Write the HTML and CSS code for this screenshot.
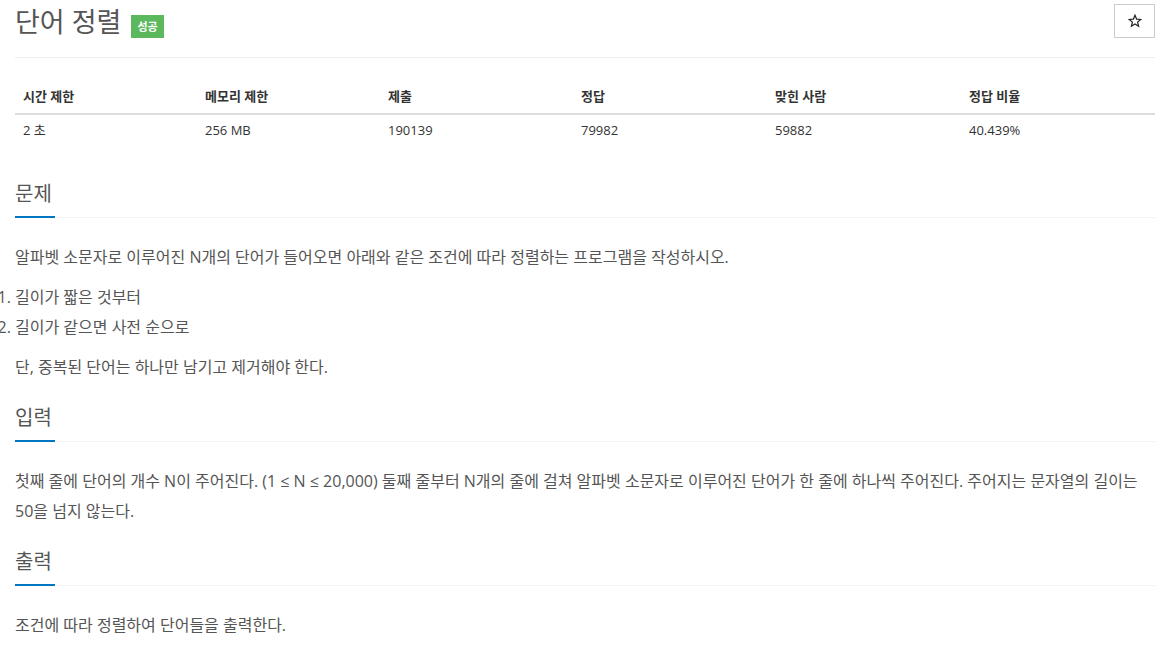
FILE: index.html
```html
<!DOCTYPE html>
<html lang="ko">
<head>
<meta charset="utf-8">
<title>단어 정렬</title>
<link rel="stylesheet" href="styles.css">
</head>
<body>
<div class="container">
  <div class="page-header">
    <h1 class="title">단어 정렬<span class="badge">성공</span></h1>
    <button class="star-btn" type="button" aria-label="즐겨찾기">
      <svg width="14" height="14" viewBox="0 0 14 14"><path d="M7 1.2 L8.6 5.1 L12.8 5.4 L9.6 8.1 L10.6 12.2 L7 10 L3.4 12.2 L4.4 8.1 L1.2 5.4 L5.4 5.1 Z" fill="none" stroke="#222" stroke-width="1.2" stroke-linejoin="miter"/></svg>
    </button>
  </div>

  <table class="info">
    <thead>
      <tr>
        <th class="c1">시간 제한</th>
        <th class="c2">메모리 제한</th>
        <th class="c3">제출</th>
        <th class="c4">정답</th>
        <th class="c5">맞힌 사람</th>
        <th class="c6">정답 비율</th>
      </tr>
    </thead>
    <tbody>
      <tr>
        <td>2 초</td>
        <td>256 MB</td>
        <td>190139</td>
        <td>79982</td>
        <td>59882</td>
        <td>40.439%</td>
      </tr>
    </tbody>
  </table>

  <section class="sec first">
    <div class="headline"><h2>문제</h2></div>
    <div class="text">
      <p>알파벳 소문자로 이루어진 N개의 단어가 들어오면 아래와 같은 조건에 따라 정렬하는 프로그램을 작성하시오.</p>
      <ol>
        <li>길이가 짧은 것부터</li>
        <li>길이가 같으면 사전 순으로</li>
      </ol>
      <p>단, 중복된 단어는 하나만 남기고 제거해야 한다.</p>
    </div>
  </section>

  <section class="sec">
    <div class="headline"><h2>입력</h2></div>
    <div class="text">
      <p>첫째 줄에 단어의 개수 N이 주어진다. (1 ≤ N ≤ 20,000) 둘째 줄부터 N개의 줄에 걸쳐 알파벳 소문자로 이루어진 단어가 한 줄에 하나씩 주어진다. 주어지는 문자열의 길이는 50을 넘지 않는다.</p>
    </div>
  </section>

  <section class="sec">
    <div class="headline"><h2>출력</h2></div>
    <div class="text">
      <p>조건에 따라 정렬하여 단어들을 출력한다.</p>
    </div>
  </section>
</div>
</body>
</html>
```

FILE: styles.css
```css
html, body {
  margin: 0;
  padding: 0;
  background: #fff;
}
body {
  font-family: "Open Sans", "Noto Sans CJK KR", sans-serif;
  color: #333;
  font-size: 13px;
}
.container {
  width: 1140px;
  padding: 0 15px;
}
.page-header {
  display: flex;
  justify-content: space-between;
  align-items: flex-start;
  height: 57px;
  border-bottom: 1px solid #eee;
}
.title {
  margin: 0;
  padding-top: 2px;
  font-size: 27px;
  font-weight: 400;
  line-height: 40px;
  color: #555;
  display: flex;
  align-items: flex-start;
}
.badge {
  display: inline-block;
  margin-left: 10px;
  margin-top: 13px;
  background: #5cb85c;
  color: #fff;
  font-size: 11px;
  font-weight: 700;
  line-height: 23px;
  height: 23px;
  padding: 0 6px;
}
.star-btn {
  margin-top: 4px;
  width: 41px;
  height: 34px;
  border: 1px solid #ccc;
  background: #fff;
  padding: 0;
  display: flex;
  align-items: center;
  justify-content: center;
}
.star-btn svg {
  display: block;
}
.info {
  width: 1140px;
  border-collapse: collapse;
  margin-top: 21px;
  table-layout: fixed;
}
.info th, .info td {
  text-align: left;
  line-height: 19px;
  font-size: 13px;
}
.info th {
  padding: 8px 8px 7px;
  font-weight: 700;
  border-bottom: 2px solid #ddd;
}
.info td {
  padding: 6px 8px 8px;
}
.c1 { width: 166px; }
.c2 { width: 167px; }
.c3 { width: 177px; }
.c4 { width: 178px; }
.c5 { width: 178px; }
.c6 { width: 178px; }
.headline {
  border-bottom: 1px dotted #e4e9f0;
  margin-top: 22px;
}
.first .headline {
  margin-top: 32px;
}
.headline h2 {
  display: inline-block;
  margin: 0 0 -1px 0;
  padding: 0 3px 8px 0;
  font-size: 20px;
  font-weight: 400;
  line-height: 28px;
  color: #555;
  border-bottom: 2px solid #0076c0;
}
.text {
  font-size: 16px;
  line-height: 30px;
  color: #555;
  padding-top: 24px;
}
.text p {
  margin: 0 0 10px 0;
}
.text ol {
  margin: 0 0 10px 0;
  padding-left: 0;
}
```
